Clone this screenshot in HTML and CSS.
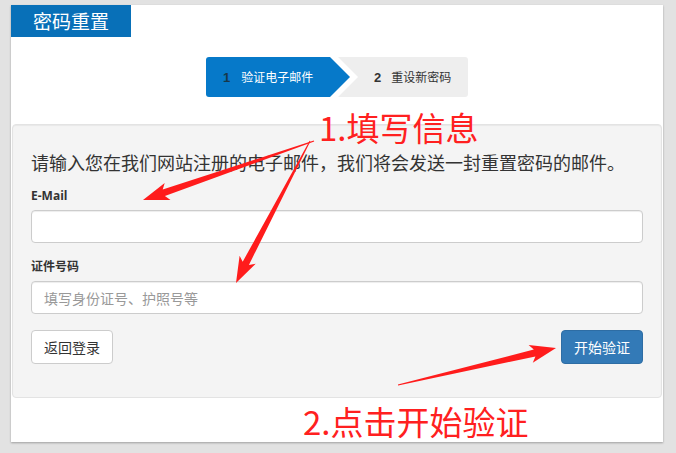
FILE: index.html
```html
<!DOCTYPE html>
<html>
<head>
  <meta charset="utf-8">
  <title>密码重置</title>
  <link rel="stylesheet" href="styles.css">
</head>
<body>
  <div class="page">
    <div class="panel-title">密码重置</div>

    <div class="steps">
      <div class="step step-active"><span class="step-num">1</span>验证电子邮件</div>
      <div class="step step-next"><span class="step-num">2</span>重设新密码</div>
    </div>

    <div class="well">
      <p class="intro">请输入您在我们网站注册的电子邮件，我们将会发送一封重置密码的邮件。</p>

      <div class="form-group">
        <label for="email">E-Mail</label>
        <input type="text" id="email" class="form-control">
      </div>

      <div class="form-group">
        <label for="idNumber">证件号码</label>
        <input type="text" id="idNumber" class="form-control" placeholder="填写身份证号、护照号等">
      </div>

      <div class="actions">
        <button class="btn">返回登录</button>
        <button class="btn btn-primary">开始验证</button>
      </div>
    </div>
  </div>

  <!-- red hints drawn over the form -->
  <svg class="hint-arrows" width="676" height="453" viewBox="0 0 676 453">
    <polygon points="314.2,141.5 164.9,196.1 170.5,200.0 143,200 164.7,183.0 162.7,189.5 313.8,140.5"/>
    <polygon points="310.4,141.2 248.9,264.9 255.7,263.7 236,283 239.6,255.7 242.7,261.7 309.6,140.8"/>
    <polygon points="398.1,385.5 535.4,356.4 532.8,362.7 556,348 528.6,345.1 533.8,349.6 397.9,384.5"/>
  </svg>
  <div class="hint hint-fill">1.填写信息</div>
  <div class="hint hint-submit">2.点击开始验证</div>
</body>
</html>
```

FILE: styles.css
```css
body {
  margin: 0;
  background-color: #e2e2e2;
  font-family: 'Open Sans', 'Noto Sans CJK SC', sans-serif;
  color: #333;
  position: relative;
  height: 453px;
  overflow: hidden;
}

.page {
  width: 652px;
  margin: 5px 0 0 11px;
  padding-bottom: 44px;
  background-color: #fff;
  box-shadow: 0 1px 2px rgba(0, 0, 0, 0.3);
}

.panel-title {
  width: 120px;
  height: 32px;
  line-height: 32px;
  text-align: center;
  background-color: #0870b8;
  color: #fff;
  font-family: 'Noto Sans CJK SC', sans-serif;
  font-size: 19px;
}

/* step indicator */
.steps {
  display: flex;
  justify-content: center;
  margin: 20px 0 27px;
}

.step {
  height: 40px;
  line-height: 40px;
  font-size: 12px;
  font-family: 'Noto Sans CJK SC', sans-serif;
  box-sizing: border-box;
}

.step-num {
  font-family: 'Liberation Sans', sans-serif;
  font-weight: bold;
  font-size: 13px;
  margin-right: 11px;
}

.step-active {
  width: 144px;
  padding-left: 17px;
  background-color: #0679c9;
  color: #fff;
  border-radius: 3px 0 0 3px;
  clip-path: polygon(0 0, 124px 0, 100% 50%, 124px 100%, 0 100%);
}

.step-active .step-num {
  color: #17384a;
}

.step-next {
  width: 130px;
  margin-left: -12px;
  padding-left: 36px;
  background-color: #eee;
  color: #333;
  border-radius: 0 3px 3px 0;
  clip-path: polygon(0 0, 100% 0, 100% 100%, 0 100%, 20px 50%);
}

.step-next .step-num {
  margin-right: 10px;
}

/* form box */
.well {
  margin: 0 1px;
  padding: 19px 18px;
  background-color: #f4f4f4;
  border: 1px solid #e3e3e3;
  border-radius: 4px;
  box-shadow: inset 0 1px 1px rgba(0, 0, 0, 0.05);
}

.intro {
  margin: 6px 0 10px;
  font-size: 18px;
  line-height: 26px;
  color: #333;
}

.form-group {
  margin-bottom: 14px;
}

.form-group label {
  display: block;
  margin-bottom: 4px;
  font-size: 12px;
  line-height: 20px;
  font-weight: bold;
  color: #333;
}

.form-control {
  display: block;
  width: 100%;
  height: 33px;
  box-sizing: border-box;
  padding: 6px 12px;
  font-size: 14px;
  font-family: 'Noto Sans CJK SC', sans-serif;
  background-color: #fff;
  border: 1px solid #ccc;
  border-radius: 4px;
  box-shadow: inset 0 1px 1px rgba(0, 0, 0, 0.075);
}

.form-control::placeholder {
  color: #999;
}

.actions {
  display: flex;
  justify-content: space-between;
  margin-top: 16px;
  margin-bottom: 14px;
}

.btn {
  height: 34px;
  padding: 0 12px;
  font-size: 14px;
  font-family: 'Noto Sans CJK SC', sans-serif;
  color: #333;
  background-color: #fff;
  border: 1px solid #ccc;
  border-radius: 4px;
}

.btn-primary {
  color: #fff;
  background-color: #337ab7;
  border-color: #2e6da4;
}

/* annotations */
.hint-arrows {
  position: absolute;
  left: 0;
  top: 0;
  fill: #ff1c1c;
}

.hint {
  position: absolute;
  font-family: 'Noto Sans CJK SC', sans-serif;
  font-size: 33px;
  line-height: 33px;
  color: #ff2020;
  white-space: nowrap;
}

.hint-fill {
  left: 319px;
  top: 111px;
}

.hint-submit {
  left: 303px;
  top: 405px;
}
```
